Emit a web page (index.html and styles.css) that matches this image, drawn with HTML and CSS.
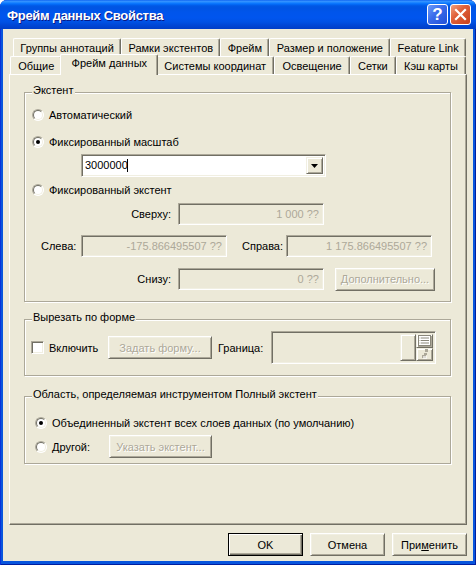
FILE: index.html
```html
<!DOCTYPE html>
<html lang="ru">
<head>
<meta charset="utf-8">
<title>Фрейм данных Свойства</title>
<link rel="stylesheet" href="styles.css">
</head>
<body>
<div class="window">
  <div class="titlebar">
    <span class="title">Фрейм данных Свойства</span>
    <div class="tbb help">?</div>
    <div class="tbb close">
      <svg width="19" height="19" viewBox="0 0 19 19"><path d="M5 5 L14 14 M14 5 L5 14" stroke="#fff" stroke-width="2.2" stroke-linecap="square"/></svg>
    </div>
  </div>
  <div class="client">
    <div class="tabrow row1">
      <div class="tab">Группы аннотаций</div>
      <div class="tab">Рамки экстентов</div>
      <div class="tab">Фрейм</div>
      <div class="tab">Размер и положение</div>
      <div class="tab">Feature Link</div>
    </div>
    <div class="tabrow row2">
      <div class="tab">Общие</div>
      <div class="tab sel">Фрейм данных</div>
      <div class="tab">Системы координат</div>
      <div class="tab">Освещение</div>
      <div class="tab">Сетки</div>
      <div class="tab">Кэш карты</div>
    </div>
    <div class="panel">
      <div class="group g1">
        <span class="gtitle">Экстент</span>
        <div class="opt"><span class="radio"></span>Автоматический</div>
        <div class="opt opt-b"><span class="radio on"></span>Фиксированный масштаб</div>
        <div class="combo sunken">
          <span class="combo-text">3000000<span class="caret"></span></span>
          <span class="dd raised"><svg width="7" height="4" viewBox="0 0 7 4"><polygon points="0,0 7,0 3.5,4" fill="#000"/></svg></span>
        </div>
        <div class="opt opt-c"><span class="radio"></span>Фиксированный экстент</div>
        <div class="frow r-top">
          <span class="lbl-r">Сверху:</span>
          <span class="field sunken">1 000 ??</span>
        </div>
        <div class="frow r-mid">
          <span class="lbl-l">Слева:</span>
          <span class="field sunken">-175.866495507 ??</span>
          <span class="lbl-s">Справа:</span>
          <span class="field sunken">1 175.866495507 ??</span>
        </div>
        <div class="frow r-bot">
          <span class="lbl-r">Снизу:</span>
          <span class="field sunken">0 ??</span>
          <span class="btn dis btn-more">Дополнительно...</span>
        </div>
      </div>
      <div class="group g2">
        <span class="gtitle">Вырезать по форме</span>
        <span class="check"></span>
        <span class="chk-lbl">Включить</span>
        <span class="btn dis btn-shape">Задать форму...</span>
        <span class="lbl-border">Граница:</span>
        <div class="bfield sunken">
          <span class="bbox raised"></span>
          <span class="bbtns">
            <span class="sbtn raised">
              <svg width="13" height="11" viewBox="0 0 13 11"><rect x="0.5" y="0.5" width="12" height="10" fill="#fff" stroke="#8A877A"/><path d="M3 3h8M3 5.5h8M3 8h8" stroke="#8A877A"/><path d="M1.5 3h1M1.5 5.5h1M1.5 8h1" stroke="#ACA899"/></svg>
            </span>
            <span class="sbtn raised">
              <svg width="8" height="10" viewBox="0 0 8 10"><rect x="4" y="0" width="3" height="3" fill="#ACA899"/><rect x="3" y="4" width="3" height="2" fill="#ACA899"/><rect x="1" y="6" width="4" height="3" fill="#ACA899"/><rect x="2" y="7" width="4" height="3" fill="#fff" opacity="0.6"/></svg>
            </span>
          </span>
        </div>
      </div>
      <div class="group g3">
        <span class="gtitle">Область, определяемая инструментом Полный экстент</span>
        <div class="opt"><span class="radio on"></span>Объединенный экстент всех слоев данных (по умолчанию)</div>
        <div class="opt opt-other"><span class="radio"></span><span class="other-lbl"><u>Д</u>ругой:</span><span class="btn dis btn-ext">Указать экстент...</span></div>
      </div>
    </div>
    <div class="buttons">
      <span class="btn btn-def">OK</span>
      <span class="btn">Отмена</span>
      <span class="btn">При<u>м</u>енить</span>
    </div>
  </div>
</div>
</body>
</html>
```
FILE: styles.css
```css
html, body {
  margin: 0;
  background: #ffffff;
}
body {
  font-family: "Liberation Sans", Arial, sans-serif;
  font-size: 11px;
  color: #000;
}
.window {
  width: 476px;
  height: 565px;
  display: flex;
  flex-direction: column;
  background: #0855DD;
  border-radius: 7px 7px 0 0;
  overflow: hidden;
  box-shadow: inset 1px 0 #0831D9, inset -1px 0 #001EA0, inset 0 -1px #001EA0;
}
.titlebar {
  height: 29px;
  flex: none;
  display: flex;
  align-items: center;
  padding: 0 5px 0 7px;
  background: linear-gradient(#0058EE 0, #3A93FF 1px, #288EFF 2px, #127DFF 3px, #036FFC 4px, #0262EE 5px, #0057E5 6px, #0054E3 8px, #0055EB 12px, #0055EE 18px, #0051E4 22px, #0047D6 25px, #0042CF 27px, #003DC6 29px);
}
.title {
  flex: 1;
  color: #fff;
  font-weight: bold;
  font-size: 13px;
  letter-spacing: -0.3px;
  line-height: 16px;
  margin-top: 3px;
  text-shadow: 1px 1px #0A1883;
}
.tbb {
  width: 21px;
  height: 21px;
  box-sizing: border-box;
  border: 1px solid #fff;
  border-radius: 3px;
  margin-left: 2px;
}
.help {
  background: linear-gradient(135deg, #6B9AFA, #3A6BEA 45%, #2250D8);
  color: #fff;
  font-weight: bold;
  font-size: 17px;
  line-height: 19px;
  text-align: center;
}
.close {
  background: linear-gradient(135deg, #F0A080, #E0603A 40%, #C8401C);
  display: flex;
  align-items: center;
  justify-content: center;
}
.close svg { display: block; }
.client {
  flex: 1;
  margin: 0 3px 4px 3px;
  background: #ECE9D8;
  display: flex;
  flex-direction: column;
  padding-top: 9px;
}
.tabrow {
  display: flex;
  height: 18px;
}
.row1 { margin: 0 7px 0 10px; }
.row2 { margin: 0 7px 0 7px; }
.tab {
  flex: 1 1 auto;
  box-sizing: border-box;
  height: 18px;
  border-top: 1px solid #fff;
  border-left: 1px solid #fff;
  border-right: 1px solid #716F64;
  border-radius: 2px 2px 0 0;
  box-shadow: inset -1px 0 #ACA899;
  background: #ECE9D8;
  text-align: center;
  white-space: nowrap;
  padding: 3px 3px 0;
  line-height: 13px;
}
.tab.sel {
  height: 21px;
  margin: -2px -2px -1px;
  padding: 2px 6px 0;
  position: relative;
  z-index: 1;
}
.panel {
  height: 451px;
  box-sizing: border-box;
  margin: 0 6px;
  border: 1px solid;
  border-color: #fff #716F64 #716F64 #fff;
  box-shadow: inset -1px -1px #ACA899;
  padding-top: 17px;
}
.group {
  position: relative;
  margin: 0 15px 0 14px;
  border: 1px solid #ACA899;
  box-shadow: inset 1px 1px #fff, 1px 1px #fff;
}
.gtitle {
  position: absolute;
  top: -9px;
  left: 7px;
  padding: 0 1px;
  background: #ECE9D8;
  line-height: 13px;
  white-space: nowrap;
}
.g1 { padding: 15px 0 11px 0; }
.opt {
  display: flex;
  align-items: center;
  height: 13px;
  padding-left: 7px;
  white-space: nowrap;
}
.opt-b { margin-top: 14px; }
.opt-c { margin-top: 6px; }
.radio {
  flex: none;
  position: relative;
  width: 12px;
  height: 12px;
  box-sizing: border-box;
  border-radius: 50%;
  border: 1px solid;
  border-color: #ACA899 #fff #fff #ACA899;
  background: #fff;
  margin-right: 5px;
}
.radio::before {
  content: "";
  position: absolute;
  inset: 0;
  border-radius: 50%;
  border: 1px solid;
  border-color: #716F64 #F1EFE2 #F1EFE2 #716F64;
}
.radio.on::after {
  content: "";
  position: absolute;
  left: 3px;
  top: 3px;
  width: 4px;
  height: 4px;
  border-radius: 50%;
  background: #000;
}
.sunken {
  box-sizing: border-box;
  border: 1px solid;
  border-color: #ACA899 #fff #fff #ACA899;
  box-shadow: inset 1px 1px #716F64, inset -1px -1px #F1EFE2;
}
.raised {
  box-sizing: border-box;
  border: 1px solid;
  border-color: #F1EFE2 #716F64 #716F64 #F1EFE2;
  box-shadow: inset 1px 1px #fff, inset -1px -1px #ACA899;
  background: #ECE9D8;
}
.combo {
  display: flex;
  width: 245px;
  height: 23px;
  margin: 6px 0 0 56px;
  background: #fff;
  padding: 2px;
}
.combo-text {
  flex: 1;
  display: flex;
  align-items: center;
  padding-left: 1px;
  line-height: 13px;
}
.caret {
  display: inline-block;
  width: 1px;
  height: 13px;
  background: #000;
  margin-left: -1px;
}
.dd {
  width: 17px;
  display: flex;
  align-items: center;
  justify-content: center;
}
.dd svg { display: block; }
.frow {
  display: flex;
  align-items: center;
  height: 22px;
}
.r-top { margin-top: 7px; }
.r-mid { margin-top: 10px; padding-left: 16px; }
.r-bot { margin-top: 11px; }
.lbl-r {
  width: 146px;
  text-align: right;
  margin-right: 7px;
}
.lbl-l { width: 40px; }
.lbl-s { width: 44px; margin-left: 15px; }
.field {
  width: 146px;
  height: 22px;
  display: flex;
  align-items: center;
  justify-content: flex-end;
  padding: 0 4px;
  color: #ACA899;
  white-space: nowrap;
}
.btn {
  box-sizing: border-box;
  height: 23px;
  border: 1px solid;
  border-color: #fff #716F64 #716F64 #fff;
  box-shadow: inset 1px 1px #F1EFE2, inset -1px -1px #ACA899;
  background: #ECE9D8;
  display: flex;
  align-items: center;
  justify-content: center;
  white-space: nowrap;
  flex: none;
}
.btn.dis {
  color: #ACA899;
  text-shadow: 1px 1px #fff;
}
.btn-more { width: 100px; margin-left: 11px; }
.g2 {
  margin-top: 17px;
  display: flex;
  align-items: center;
  height: 33px;
  padding: 11px 0 11px 6px;
  box-sizing: content-box;
}
.check {
  flex: none;
  width: 13px;
  height: 13px;
  box-sizing: border-box;
  border: 1px solid;
  border-color: #ACA899 #fff #fff #ACA899;
  box-shadow: inset 1px 1px #716F64, inset -1px -1px #F1EFE2;
  background: #fff;
  margin-right: 5px;
}
.chk-lbl { width: 59px; }
.btn-shape { width: 104px; }
.lbl-border { width: 53px; margin-left: 6px; }
.bfield {
  width: 165px;
  height: 33px;
  display: flex;
  justify-content: flex-end;
  padding: 2px 2px 2px 2px;
  background: #ECE9D8;
}
.bbox { width: 16px; }
.bbtns {
  display: flex;
  flex-direction: column;
  width: 17px;
}
.sbtn {
  flex: 1;
  display: flex;
  align-items: center;
  justify-content: center;
}
.sbtn svg { display: block; }
.g3 {
  margin-top: 20px;
  padding: 19px 0 5px 0;
}
.g3 .opt { padding-left: 10px; }
.opt-other {
  margin-top: 6px;
  height: 23px;
}
.other-lbl { width: 57px; }
.btn-ext { width: 103px; }
.buttons {
  display: flex;
  justify-content: flex-end;
  gap: 7px;
  margin-top: 8px;
  padding-right: 6px;
}
.buttons .btn { width: 75px; }
.btn-def {
  border-color: #000;
  box-shadow: inset 1px 1px #fff, inset -1px -1px #716F64, inset -2px -2px #ACA899;
}
```
